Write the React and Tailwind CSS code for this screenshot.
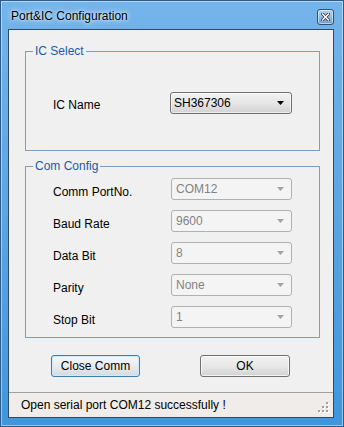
import React from 'react';

const ports = [
    { label: 'Comm PortNo.', value: 'COM12' },
    { label: 'Baud Rate', value: '9600' },
    { label: 'Data Bit', value: '8' },
    { label: 'Parity', value: 'None' },
    { label: 'Stop Bit', value: '1' },
];

function Arrow({ color }) {
    return (
        <svg width="7" height="4" viewBox="0 0 7 4" className="shrink-0">
            <path d="M0 0 H7 L3.5 4 Z" fill={color} />
        </svg>
    );
}

function DisabledCombo({ value }) {
    return (
        <div className="w-[121px] h-[22px] flex items-center justify-between pl-[4px] pr-[7px] border border-[#adb2b5] rounded-[3px] bg-[#f4f4f4] text-[#838383]">
            <span>{value}</span>
            <Arrow color="#a3a3a3" />
        </div>
    );
}

export default function App() {
    return (
        <div className="w-[344px] h-[427px] overflow-hidden bg-gradient-to-b from-[#74b4ea] to-[#3f96db] border border-[#2d5c8c] shadow-[inset_0_0_0_1px_rgba(255,255,255,0.45)] font-['Liberation_Sans',Arial,sans-serif] text-[12px] leading-[14px] text-black">
            {/* title bar */}
            <div className="h-[28px] flex items-center justify-between pl-[10px] pr-[9px]">
                <span className="pt-[2px] [text-shadow:0_0_6px_rgba(255,255,255,0.95),0_0_3px_rgba(255,255,255,0.8)]">Port&amp;IC Configuration</span>
                <div className="w-[17px] h-[16px] mt-[3px] flex items-center justify-center rounded-[3px] border border-[#2f4f78] bg-gradient-to-b from-[#b6d3f0] to-[#6f9fd2] shadow-[inset_0_0_0_1px_rgba(255,255,255,0.5)]">
                    <svg width="9" height="8" viewBox="0 0 9 8">
                        <path d="M1.5 1 L7.5 7 M7.5 1 L1.5 7" stroke="#3a3a3a" strokeWidth="3" strokeLinecap="square" />
                        <path d="M1.5 1 L7.5 7 M7.5 1 L1.5 7" stroke="#ffffff" strokeWidth="1.4" strokeLinecap="square" />
                    </svg>
                </div>
            </div>

            {/* client area */}
            <div className="ml-[7px] w-[326px] h-[389px] border border-[#2e4a68] bg-[#f0f0f0] flex flex-col">
                {/* IC Select */}
                <div className="relative mt-[21px] ml-[16px] w-[295px] h-[100px] border border-[#7d9ec0]">
                    <span className="absolute -top-[8px] left-[7px] px-[2px] bg-[#f0f0f0] text-[#1c5aa8]">IC Select</span>
                    <div className="flex items-center pt-[40px] pl-[27px]">
                        <span className="w-[117px] pt-[4px]">IC Name</span>
                        <div className="w-[122px] h-[22px] flex items-center justify-between pl-[3px] pr-[7px] border border-[#707070] rounded-[3px] bg-gradient-to-b from-[#f2f2f2] via-[#e6e6e6] to-[#d2d2d2] shadow-[inset_0_0_0_1px_rgba(255,255,255,0.6)]">
                            <span>SH367306</span>
                            <Arrow color="#000000" />
                        </div>
                    </div>
                </div>

                {/* Com Config */}
                <div className="relative mt-[15px] ml-[16px] w-[295px] h-[172px] border border-[#7d9ec0]">
                    <span className="absolute -top-[8px] left-[7px] px-[2px] bg-[#f0f0f0] text-[#1c5aa8]">Com Config</span>
                    <div className="flex flex-col gap-[10px] pt-[11px] pl-[27px]">
                        {ports.map((p) => (
                            <div key={p.label} className="flex items-center">
                                <span className="w-[118px] pt-[5px]">{p.label}</span>
                                <DisabledCombo value={p.value} />
                            </div>
                        ))}
                    </div>
                </div>

                {/* buttons */}
                <div className="flex mt-[17px] ml-[42px] gap-[60px]">
                    <button className="w-[89px] h-[22px] flex items-center justify-center border border-[#3c7fb1] rounded-[3px] bg-gradient-to-b from-[#f4f8fb] via-[#e8ecef] to-[#d6dadd] shadow-[inset_0_0_0_1px_#cfeafa]">
                        Close Comm
                    </button>
                    <button className="w-[90px] h-[22px] flex items-center justify-center border border-[#707070] rounded-[3px] bg-gradient-to-b from-[#f2f2f2] via-[#e8e8e8] to-[#d2d2d2] shadow-[inset_0_0_0_1px_rgba(255,255,255,0.7)]">
                        OK
                    </button>
                </div>

                {/* status bar */}
                <div className="mt-auto h-[25px] flex items-center justify-between border-t border-[#a0a0a0] bg-[#efece9] pl-[12px]">
                    <span>Open serial port COM12 successfully !</span>
                    <svg width="12" height="12" viewBox="0 0 12 12" className="self-end mb-[3px] mr-[3px]">
                        <g fill="#ffffff">
                            <rect x="9" y="1" width="2" height="2" />
                            <rect x="5" y="5" width="2" height="2" />
                            <rect x="9" y="5" width="2" height="2" />
                            <rect x="1" y="9" width="2" height="2" />
                            <rect x="5" y="9" width="2" height="2" />
                            <rect x="9" y="9" width="2" height="2" />
                        </g>
                        <g fill="#a0a0a0">
                            <rect x="8" y="0" width="2" height="2" />
                            <rect x="4" y="4" width="2" height="2" />
                            <rect x="8" y="4" width="2" height="2" />
                            <rect x="0" y="8" width="2" height="2" />
                            <rect x="4" y="8" width="2" height="2" />
                            <rect x="8" y="8" width="2" height="2" />
                        </g>
                    </svg>
                </div>
            </div>
        </div>
    );
}
